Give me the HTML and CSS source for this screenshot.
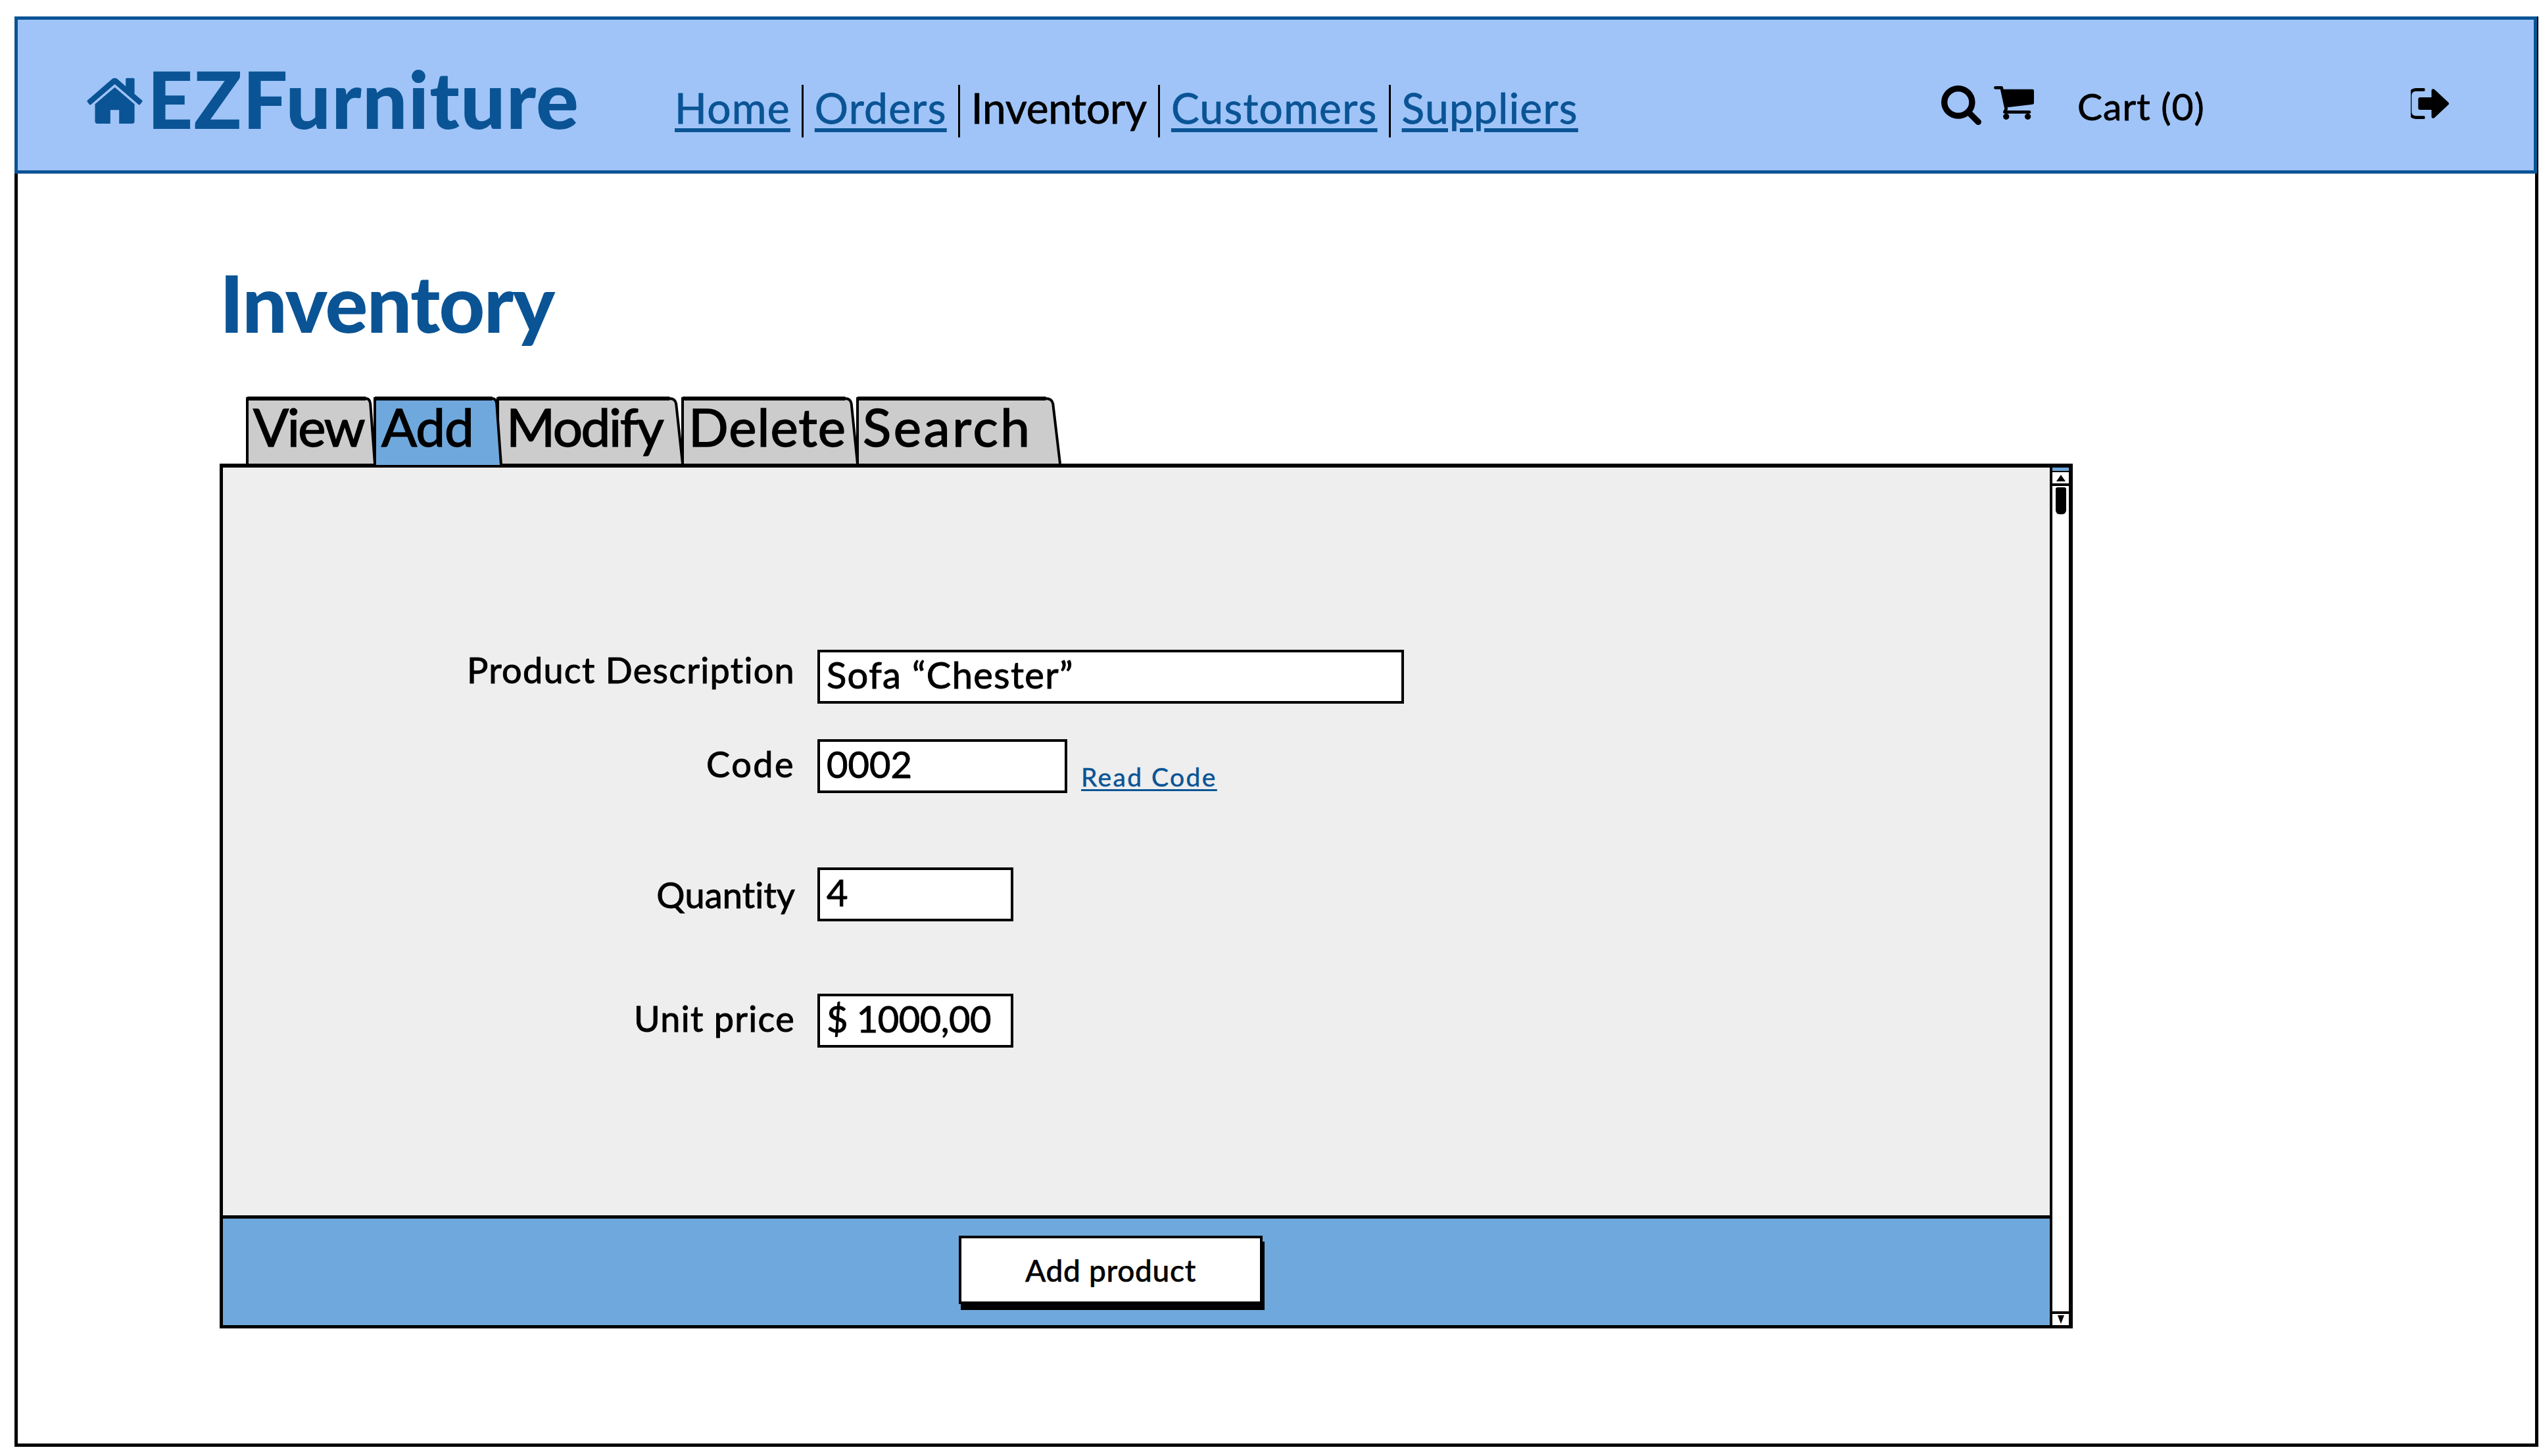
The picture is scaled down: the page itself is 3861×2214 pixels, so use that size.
FILE: index.html
```html
<!DOCTYPE html>
<html lang="en">
<head>
    <meta charset="UTF-8">
    <title>EZFurniture - Inventory</title>
    <link rel="stylesheet" href="styles.css">
</head>
<body>
    <div class="frame">
        <header class="topbar">
            <div class="logo">
                <svg class="logo-icon" viewBox="62 240 1668 1296" preserveAspectRatio="none"><path d="M1472 992v480q0 26-19 45t-45 19h-384v-384h-256v384h-384q-26 0-45-19t-19-45v-480q0-1 .5-3t.5-3l575-474 575 474q1 2 1 6zm223-69l-62 74q-8 9-21 11h-3q-13 0-21-7l-692-577-692 577q-12 8-24 7-13-2-21-11l-62-74q-8-10-7-23.500t11-21.500l719-599q32-26 76-26t76 26l244 204v-195q0-14 9-23t23-9h192q14 0 23 9t9 23v408l219 182q10 8 11 21.500t-7 23.500z"/></svg>
                <span class="logo-text">EZFurniture</span>
            </div>
            <nav class="mainnav">
                <a href="#home">Home</a>
                <a href="#orders">Orders</a>
                <span class="current">Inventory</span>
                <a href="#customers">Customers</a>
                <a href="#suppliers">Suppliers</a>
            </nav>
            <div class="tools">
                <svg class="icon-search" viewBox="64 128 1664 1664" preserveAspectRatio="none"><path d="M1216 832q0-185-131.500-316.500t-316.500-131.500-316.500 131.500-131.500 316.500 131.500 316.500 316.500 131.500 316.500-131.500 131.500-316.500zm512 832q0 52-38 90t-90 38q-54 0-90-38l-343-342q-179 124-399 124-143 0-273.500-55.500t-225-150-150-225-55.500-273.500 55.500-273.500 150-225 225-150 273.500-55.500 273.500 55.500 225 150 150 225 55.500 273.500q0 220-124 399l343 343q37 37 37 90z"/></svg>
                <svg class="icon-cart" viewBox="64 256 1664 1408" preserveAspectRatio="none"><path d="M704 1536q0 52-38 90t-90 38-90-38-38-90 38-90 90-38 90 38 38 90zm896 0q0 52-38 90t-90 38-90-38-38-90 38-90 90-38 90 38 38 90zm128-1088v512q0 24-16.500 42.500t-40.500 21.500l-1044 122q13 60 13 70 0 16-24 64h920q26 0 45 19t19 45-19 45-45 19h-1024q-26 0-45-19t-19-45q0-11 8-31.500t16-36 21.500-40 15.500-29.500l-177-823h-204q-26 0-45-19t-19-45 19-45 45-19h256q16 0 28.500 6.500t19.500 15.500 13 24.500 8 26 5.500 29.500 4.500 26h1201q26 0 45 19t19 45z"/></svg>
                <span class="cart-text">Cart (0)</span>
                <svg class="icon-logout" viewBox="160 256 1472 1280" preserveAspectRatio="none"><path d="M704 1440q0 4 1 20t.5 26.500-3 23.500-10 19.500-20.500 6.500h-320q-119 0-203.500-84.500t-84.500-203.500v-704q0-119 84.500-203.500t203.500-84.500h320q13 0 22.500 9.500t9.500 22.500q0 4 1 20t.5 26.500-3 23.500-10 19.500-20.500 6.500h-320q-66 0-113 47t-47 113v704q0 66 47 113t113 47h312l11.500 1 11.500 3 8 5.500 7 9 2 13.500zm928-544q0 26-19 45l-544 544q-19 19-45 19t-45-19-19-45v-288h-448q-26 0-45-19t-19-45v-384q0-26 19-45t45-19h448v-288q0-26 19-45t45-19 45 19l544 544q19 19 19 45z"/></svg>
            </div>
        </header>

        <main class="content">
            <h1 class="page-title">Inventory</h1>

            <div class="tabs">
                <div class="tab tab-view">
                    <svg class="tab-shape" viewBox="0 0 100 100" preserveAspectRatio="none"><path class="tab-fill" d="M0 100V0H93Q96 0 96.500 8L100 100"/><path class="tab-top" d="M0 0H93"/></svg>
                    <span class="tab-label">View</span>
                </div>
                <div class="tab tab-add active">
                    <svg class="tab-shape" viewBox="0 0 100 100" preserveAspectRatio="none"><path class="tab-fill" d="M0 100V0H93Q96 0 96.500 8L100 100"/><path class="tab-top" d="M0 0H93"/></svg>
                    <span class="tab-label">Add</span>
                </div>
                <div class="tab tab-modify">
                    <svg class="tab-shape" viewBox="0 0 100 100" preserveAspectRatio="none"><path class="tab-fill" d="M0 100V0H93Q96 0 96.500 8L100 100"/><path class="tab-top" d="M0 0H93"/></svg>
                    <span class="tab-label">Modify</span>
                </div>
                <div class="tab tab-delete">
                    <svg class="tab-shape" viewBox="0 0 100 100" preserveAspectRatio="none"><path class="tab-fill" d="M0 100V0H93Q96 0 96.500 8L100 100"/><path class="tab-top" d="M0 0H93"/></svg>
                    <span class="tab-label">Delete</span>
                </div>
                <div class="tab tab-search">
                    <svg class="tab-shape" viewBox="0 0 100 100" preserveAspectRatio="none"><path class="tab-fill" d="M0 100V0H93Q96 0 96.500 8L100 100"/><path class="tab-top" d="M0 0H93"/></svg>
                    <span class="tab-label">Search</span>
                </div>
            </div>

            <section class="panel">
                <div class="panel-main">
                    <div class="form-area">
                        <div class="row row-desc">
                            <label>Product Description</label>
                            <div class="field field-wide">Sofa “Chester”</div>
                        </div>
                        <div class="row row-code">
                            <label>Code</label>
                            <div class="field field-code">0002</div>
                            <a class="read-code" href="#read">Read Code</a>
                        </div>
                        <div class="row row-qty">
                            <label>Quantity</label>
                            <div class="field field-small">4</div>
                        </div>
                        <div class="row row-price">
                            <label>Unit price</label>
                            <div class="field field-small">$ 1000,00</div>
                        </div>
                    </div>
                    <div class="panel-footer">
                        <button class="add-btn" type="button">Add product</button>
                    </div>
                </div>
                <div class="scrollbar">
                    <div class="scroll-cap"></div>
                    <div class="scroll-btn"><span class="arrow-up"></span></div>
                    <div class="scroll-track"><div class="scroll-thumb"></div></div>
                    <div class="scroll-btn scroll-btn-down"><span class="arrow-down"></span></div>
                </div>
            </section>
        </main>
    </div>
</body>
</html>
```

FILE: styles.css
```css
* {
    box-sizing: border-box;
}

body {
    margin: 0;
    background-color: #fff;
    color: #000;
    font-family: "Lato", "Open Sans", sans-serif;
}

.frame {
    width: 3838px;
    height: 2175px;
    margin: 25px 0 0 22px;
    border: 5px solid #000;
    border-top: none;
}

/* header */

.topbar {
    display: flex;
    align-items: flex-start;
    height: 239px;
    margin: 0 -3px 0 -5px;
    padding: 59px 129px 0 104px;
    background-color: #a0c4f8;
    border: 5px solid #0a5495;
}

.logo {
    display: flex;
    align-items: flex-start;
    flex: 0 0 878px;
}

.logo-icon {
    width: 87px;
    height: 70px;
    margin-top: 29px;
    fill: #0a5495;
}

.logo-text {
    margin-left: 6px;
    font-size: 121px;
    font-weight: 900;
    line-height: 1;
    letter-spacing: 1.1px;
    color: #0a5495;
}

.mainnav {
    display: flex;
    flex-shrink: 0;
    margin-top: 40px;
}

.mainnav a,
.mainnav .current {
    height: 80px;
    padding: 0 17px;
    border-right: 3px solid #000;
    font-size: 64px;
    line-height: 70px;
    letter-spacing: 1.3px;
    -webkit-text-stroke: 0.8px;
}

.mainnav .current {
    letter-spacing: -0.2px;
}

.mainnav a {
    color: #0a5495;
    text-decoration-thickness: 6px;
    text-underline-offset: 7px;
}

.mainnav a:last-child {
    border-right: none;
}

.tools {
    display: flex;
    align-items: flex-start;
    width: 772px;
    margin-left: auto;
    margin-top: 40px;
}

.icon-search {
    width: 61px;
    height: 60px;
    margin-top: 1px;
}

.icon-cart {
    width: 61px;
    height: 51px;
    margin-top: 2px;
    margin-left: 19px;
}

.cart-text {
    margin-left: 66px;
    font-size: 57px;
    line-height: 64px;
    letter-spacing: 1px;
    -webkit-text-stroke: 0.8px;
}

.icon-logout {
    width: 58px;
    height: 47px;
    margin-top: 5px;
    margin-left: auto;
}

/* content */

.content {
    padding: 135px 0 0 307px;
}

.page-title {
    margin: 0 0 86px;
    font-size: 121px;
    font-weight: 900;
    line-height: 1;
    letter-spacing: -1.6px;
    color: #0a5495;
}

.tabs {
    display: flex;
    height: 99px;
    margin-left: 42px;
}

.tab {
    position: relative;
    height: 99px;
}

.tab-view {
    width: 194px;
}

.tab-add {
    z-index: 1;
    width: 192px;
    height: 101px;
}

.tab-modify {
    width: 281px;
    margin-left: -5px;
}

.tab-delete {
    width: 266px;
}

.tab-search {
    width: 308px;
}

.tab-shape {
    position: absolute;
    top: 0;
    left: 0;
    width: 100%;
    height: 100%;
    overflow: visible;
}

.tab-fill {
    fill: #ccc;
    stroke: #000;
    stroke-width: 4px;
    vector-effect: non-scaling-stroke;
}

.tab-top {
    fill: none;
    stroke: #000;
    stroke-width: 6px;
    vector-effect: non-scaling-stroke;
}

.active .tab-fill {
    fill: #6fa8dc;
}

.tab-label {
    position: relative;
    display: block;
    font-size: 80px;
    line-height: 84px;
    white-space: nowrap;
    -webkit-text-stroke: 1.5px;
}

.tab-view .tab-label { padding-left: 9px; letter-spacing: -2.5px; }
.tab-add .tab-label { padding-left: 10px; letter-spacing: -1px; }
.tab-modify .tab-label { padding-left: 13px; letter-spacing: -2.4px; }
.tab-delete .tab-label { padding-left: 9px; letter-spacing: 1px; }
.tab-search .tab-label { padding-left: 8px; letter-spacing: 3.7px; }

.panel {
    display: flex;
    width: 2818px;
    height: 1315px;
    border: 6px solid #000;
    border-bottom-width: 5px;
    border-left-width: 5px;
    background-color: #eee;
}

.panel-main {
    display: flex;
    flex-direction: column;
    flex: 1;
}

.form-area {
    flex: 1;
    padding-top: 277px;
}

.row {
    display: flex;
    align-items: center;
    height: 82px;
}

.row label {
    flex: 0 0 870px;
    margin-right: 34px;
    text-align: right;
    font-size: 54px;
    letter-spacing: 1.3px;
    -webkit-text-stroke: 1px;
}

.row-desc label {
    margin-bottom: 22px;
}

.row-code {
    margin-top: 54px;
}

.row-code label,
.row-price label {
    margin-bottom: 8px;
}

.row-code label {
    letter-spacing: 2.5px;
}

.row-qty {
    margin-top: 113px;
}

.row-qty label {
    letter-spacing: 0.2px;
}

.row-price {
    margin-top: 110px;
}

.field {
    height: 82px;
    padding-left: 10px;
    background-color: #fff;
    border: 4px solid #000;
    font-size: 56px;
    line-height: 68px;
    white-space: nowrap;
    -webkit-text-stroke: 1px;
}

.field-wide {
    width: 892px;
    letter-spacing: 1.4px;
}

.field-code {
    width: 380px;
}

.field-small {
    width: 298px;
    letter-spacing: -0.5px;
}

.read-code {
    align-self: flex-end;
    margin: 0 0 2px 21px;
    font-size: 39px;
    letter-spacing: 2.4px;
    color: #0a5495;
    text-decoration-thickness: 3px;
    text-underline-offset: 4px;
    -webkit-text-stroke: 0.5px;
}

.panel-footer {
    height: 167px;
    padding: 26px 0 0 1119px;
    background-color: #6fa8dc;
    border-top: 5px solid #000;
}

.add-btn {
    display: block;
    width: 462px;
    height: 104px;
    padding: 0;
    background-color: #fff;
    border: 4px solid #000;
    box-shadow: 3px 9px 0 #000;
    font-family: inherit;
    font-size: 46px;
    font-weight: 500;
    letter-spacing: 0.7px;
    color: #000;
    -webkit-text-stroke: 0.5px;
}

/* scrollbar */

.scrollbar {
    display: flex;
    flex-direction: column;
    flex: 0 0 29px;
    background-color: #000;
    padding-left: 4px;
}

.scroll-cap {
    height: 5px;
    background-color: #6fa8dc;
}

.scroll-btn {
    display: flex;
    align-items: center;
    justify-content: center;
    height: 17px;
    margin-top: 2px;
    background-color: #fff;
}

.scroll-btn-down {
    margin-top: 0;
    height: 21px;
    border-top: 4px solid #000;
}

.arrow-up {
    width: 0;
    height: 0;
    border-left: 7px solid transparent;
    border-right: 7px solid transparent;
    border-bottom: 10px solid #000;
}

.arrow-down {
    width: 0;
    height: 0;
    border-left: 5px solid transparent;
    border-right: 5px solid transparent;
    border-top: 13px solid #000;
}

.scroll-track {
    flex: 1;
    margin-top: 4px;
    padding: 2px 4px 0 5px;
    background-color: #fff;
}

.scroll-thumb {
    height: 41px;
    background-color: #000;
    border-radius: 3px 3px 6px 6px;
}
```
